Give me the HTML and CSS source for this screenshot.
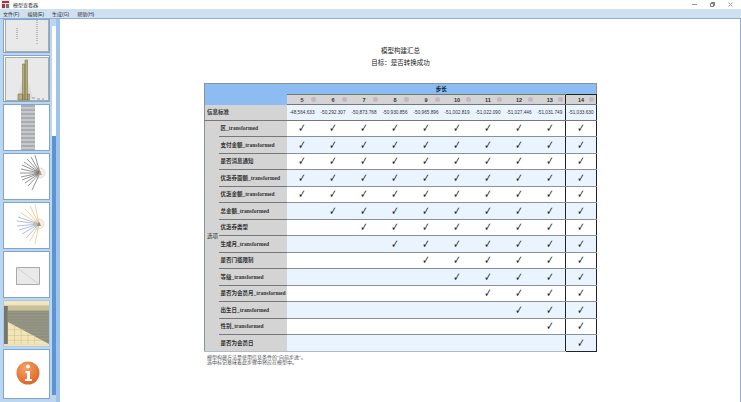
FILE: index.html
```html
<!DOCTYPE html>
<html lang="zh-CN">
	<head>
		<meta charset="utf-8">
		<title>模型查看器</title>
		<link rel="stylesheet" href="styles.css">
	</head>
	<body>
		<div class="title-bar">
			<svg class="app-icon" width="9" height="9" viewBox="0 0 9 9">
				<rect width="9" height="9" fill="#e8e8e8"></rect>
				<rect x="1" y="1" width="7" height="2" fill="#b03040"></rect>
				<rect x="1" y="4" width="3" height="4" fill="#b03040"></rect>
				<rect x="5" y="4" width="3" height="4" fill="#707078"></rect>
			</svg>
			<span class="app-title">模型查看器</span>
			<div class="window-buttons">
				<svg width="5" height="5" viewBox="0 0 5 5"><path d="M0 2.500h5" stroke="#999"></path></svg>
				<svg width="5" height="5" viewBox="0 0 5 5"><path d="M.5 1.500h3v3h-3zM1.500 1V.5h3v3H4" fill="none" stroke="#777"></path></svg>
				<svg width="5" height="5" viewBox="0 0 5 5"><path d="M.5 .5l4 4M4.500 .5l-4 4" stroke="#999"></path></svg>
			</div>
		</div>
		<div class="menu-bar">
			<span>文件(F)</span>
			<span>编辑(E)</span>
			<span>生成(G)</span>
			<span>帮助(H)</span>
		</div>
		<div class="workspace">
			<div class="sidebar">
				<div class="thumbs">
					<div class="thumb thumb-cut">
						<svg width="44" height="33" viewBox="0 0 44 33">
							<rect x=".5" y="-2" width="43" height="34.500" fill="#e9e9e9" stroke="#aaa"></rect>
							<path d="M32 1v22M12 9v12M32 24v2" stroke="#889" stroke-dasharray="1 1"></path>
						</svg>
					</div>
					<div class="thumb">
						<svg width="44" height="44" viewBox="0 0 44 44">
							<rect x=".5" y=".5" width="43" height="43" fill="#e9e9e9" stroke="#aaa"></rect>
							<path d="M12 42L17 24 20 6 23 24 28 42z" fill="#dcdcdc"></path>
							<path d="M13 37h5v6h-5zM17.500 7h2.500v36h-2.500zM20 3h2.500v40H20zM22.500 37h2v6h-2z" fill="#b9ae78" stroke="#6d6640" stroke-width=".5"></path>
							<path d="M27 41h3M32 42h3M37 42h2" stroke="#999"></path>
						</svg>
					</div>
					<div class="thumb">
						<svg width="44" height="45" viewBox="0 0 44 45">
							<rect x="16" width="14" height="45" fill="#a9adb1"></rect>
							<path d="M16 3h14M16 7h14M16 11h14M16 15h14M16 19h14M16 23h14M16 27h14M16 31h14M16 35h14M16 39h14M16 43h14" stroke="#e4e4e4"></path>
						</svg>
					</div>
					<div class="thumb">
						<svg width="44" height="45" viewBox="0 0 44 45">
							<circle cx="35" cy="19" r="5" fill="#f3efe8" stroke="#e4dfd8"></circle>
							<path d="M35 19L30 1M35 19L26 3M35 19L22 5M35 19L19 8M35 19L17 11M35 19L16 15M35 19L15 19M35 19L16 23M35 19L17 26M35 19L20 29M35 19L23 32M35 19L27 36" stroke="#666" stroke-width=".7"></path>
							<path d="M35 16.500l2 4.500h-4z" fill="#b8a878"></path>
						</svg>
					</div>
					<div class="thumb">
						<svg width="44" height="45" viewBox="0 0 44 45">
							<circle cx="34" cy="21" r="5" fill="#f3efe8" stroke="#e4dfd8"></circle>
							<path d="M34 21L30 1M34 21L25 3M34 21L20 6M34 21L16 10M34 21L30 41M34 21L25 38" stroke="#eec48a" stroke-width=".8"></path>
							<path d="M34 21L13 14M34 21L12 18M34 21L12 23M34 21L14 27M34 21L17 31M34 21L21 35" stroke="#9db0cc" stroke-width=".8"></path>
							<path d="M34 18.500l2 4.500h-4z" fill="#a09070"></path>
						</svg>
					</div>
					<div class="thumb">
						<svg width="44" height="45" viewBox="0 0 44 45">
							<rect x="11.500" y="15.500" width="23" height="17" fill="#e9e9e9" stroke="#aaa"></rect>
							<path d="M11.500 15.500l23 17" stroke="#d4d4d4"></path>
						</svg>
					</div>
					<div class="thumb thumb-active">
						<svg width="47" height="47" viewBox="0 0 47 47">
							<rect width="47" height="47" fill="#f1e7bf"></rect>
							<rect x="4" y="5" width="43" height="40" fill="#8f9080"></rect>
							<rect x="4" y="5" width="43" height="5" fill="#c9bf98"></rect>
							<path d="M4 12h43M4 15h43M4 18h43M4 21h43M4 24h43M4 27h43M4 30h43M4 33h43M4 36h43M4 39h43" stroke="#a3a490" stroke-width=".5"></path>
							<path d="M4 22L47 45H4z" fill="#f3e6b6"></path>
							<path d="M4 30h18M4 36h28M4 41h37M11 24v21M18 28v17M25 32v13M32 36v9" stroke="#c9b888" stroke-width=".5"></path>
							<rect y="5" width="4" height="40" fill="#77766a"></rect>
						</svg>
					</div>
					<div class="thumb thumb-last">
						<svg width="44" height="46" viewBox="0 0 44 46">
							<defs>
								<radialGradient id="info-ball" cx=".4" cy=".3" r=".8">
									<stop offset="0" stop-color="#f6a266"></stop>
									<stop offset="1" stop-color="#d9601c"></stop>
								</radialGradient>
							</defs>
							<circle cx="23" cy="22" r="11.500" fill="url(#info-ball)"></circle>
							<circle cx="23" cy="15.500" r="2" fill="#fff"></circle>
							<path d="M20.500 20h4.500v8h2v2h-7v-2h2v-6h-1.500z" fill="#fff"></path>
						</svg>
					</div>
				</div>
				<div class="thumb-scroll">
					<div class="scroll-btn"></div>
					<div class="scroll-thumb"></div>
					<div class="scroll-track"></div>
					<div class="scroll-btn"></div>
				</div>
			</div>
			<div class="splitter"></div>
			<div class="content">
				<p class="report-title">模型构建汇总</p>
				<p class="report-target">目标：是否转换成功</p>
				<table class="summary">
					<colgroup>
						<col class="col-side">
						<col class="col-name">
						<col span="10" class="col-step">
					</colgroup>
					<thead>
						<tr class="step-head">
							<th colspan="2" rowspan="2"></th>
							<th colspan="10">步长</th>
						</tr>
						<tr class="step-nums" id="step-nums"></tr>
						<tr class="criteria" id="criteria">
							<th colspan="2">信息标准</th>
						</tr>
					</thead>
					<tbody id="rows"></tbody>
				</table>
				<p class="note">模型构建方法是使用信息条件的"向前步进"。<br>选中标记意味着此步骤中将应在模型中。</p>
			</div>
		</div>

		<script>
			const steps = [5, 6, 7, 8, 9, 10, 11, 12, 13, 14];
			const values = ['-48,564.633', '-50,292.307', '-50,873.768', '-50,930.856', '-50,965.896', '-51,002.819', '-51,022.090', '-51,027.446', '-51,031.749', '-51,033.630'];
			// first step each effect shows up in
			const effects = [
				['区_transformed', 5],
				['支付金额_transformed', 5],
				['是否消息通知', 5],
				['优惠券面额_transformed', 5],
				['优惠金额_transformed', 5],
				['总金额_transformed', 6],
				['优惠券类型', 7],
				['生成月_transformed', 8],
				['是否门槛限制', 9],
				['等级_transformed', 10],
				['是否为会员月_transformed', 11],
				['出生日_transformed', 12],
				['性别_transformed', 13],
				['是否为会员日', 14]
			];

			let stepRow = document.getElementById('step-nums');
			let critRow = document.getElementById('criteria');
			steps.forEach((step, i) => {
				let cls = step == 14 ? ' class = "sel"' : '';
				stepRow.insertAdjacentHTML('beforeend', `<th${cls}><span class="num">${step}</span><i class="dot"></i></th>`);
				critRow.insertAdjacentHTML('beforeend', `<td${cls}>${values[i]}</td>`);
			});

			let body = document.getElementById('rows');
			effects.forEach((effect, i) => {
				let row = document.createElement('tr');
				let html = i == 0 ? `<th class="side" rowspan="${effects.length}">选项</th>` : '';
				html += `<th class="name">${effect[0]}</th>`;
				for(let step of steps) {
					let cls = step == 14 ? 'sel' : '';
					html += `<td class="${cls}">${step >= effect[1] ? '<span class="mark">✓</span>' : ''}</td>`;
				}
				row.innerHTML = html;
				body.appendChild(row);
			});
		</script>
	</body>
</html>
```
FILE: styles.css
```css
html, body {
	margin: 0;
	height: 402px;
	overflow: hidden;
}
body {
	display: flex;
	flex-direction: column;
	font-family: "Liberation Sans", "Noto Sans CJK SC", sans-serif;
	background: white;
}
.title-bar {
	height: 9px;
	display: flex;
	align-items: center;
	padding-left: 1px;
	gap: 3px;
}
.app-title {
	font-size: 5px;
	color: #333;
}
.window-buttons {
	margin-left: auto;
	display: flex;
	gap: 13px;
	padding-right: 8px;
}
.menu-bar {
	height: 9px;
	display: flex;
	align-items: center;
	gap: 8px;
	padding-left: 3px;
	background: #cfe0f1;
	border-bottom: 1px solid #8fb0d4;
	font-size: 5px;
	color: #333;
}
.workspace {
	flex: 1;
	display: flex;
	min-height: 0;
}
.sidebar {
	width: 56px;
	display: flex;
	background: #bcd6f0;
	overflow: hidden;
}
.thumbs {
	width: 52px;
	padding-left: 3px;
	box-sizing: border-box;
	display: flex;
	flex-direction: column;
	gap: 2px;
}
.thumb {
	width: 47px;
	height: 47px;
	flex: none;
	background: white;
	box-sizing: border-box;
	border: 1px solid #7fa6d0;
	display: flex;
	align-items: center;
	justify-content: center;
	overflow: hidden;
}
.thumb-cut {
	height: 34px;
	align-items: flex-end;
}
.thumb-active {
	border-color: #a9c8ea;
}
.thumb-last {
	height: 50px;
}
.thumb-scroll {
	width: 4px;
	display: flex;
	flex-direction: column;
}
.scroll-btn {
	height: 7px;
	flex: none;
	background: #bcd6f0;
}
.scroll-thumb {
	height: 110px;
	flex: none;
	background: white;
}
.scroll-track {
	flex: 1;
	background: #5b94d2;
}
.splitter {
	width: 4px;
	background: #9fc3ea;
}
.content {
	flex: 1;
	box-sizing: border-box;
	border-right: 1px solid #8fb0d4;
	padding-top: 28px;
	padding-left: 144px;
	color: #222;
	font-family: "Liberation Serif", "Noto Sans CJK SC", serif;
}
.report-title {
	margin: 0;
	width: 393px;
	text-align: center;
	font-size: 6.500px;
	line-height: 8px;
}
.report-target {
	margin: 4px 0 16px;
	width: 393px;
	text-align: center;
	font-size: 6.500px;
	line-height: 8px;
}
.summary {
	width: 393px;
	table-layout: fixed;
	border-collapse: collapse;
	font-size: 5.500px;
	color: #333;
	border: 1px solid #8a929a;
	border-bottom: none;
}
.col-side {
	width: 14px;
}
.col-name {
	width: 68px;
}
.col-step {
	width: 31px;
}
.summary th, .summary td {
	padding: 0;
}
.step-head th {
	height: 10px;
	background: #8dbcf2;
	color: #123;
}
.step-nums th {
	height: 9px;
	background: #d4d4d4;
	border-top: 1px solid #777;
	border-bottom: 1px solid #777;
	position: relative;
}
.num {
	font-family: "Liberation Sans", sans-serif;
}
.dot {
	position: absolute;
	right: 2px;
	top: 2px;
	width: 5px;
	height: 5px;
	border-radius: 50%;
	background: #c4b6c4;
}
.criteria th {
	height: 15px;
	background: #d4d4d4;
	text-align: left;
	padding-left: 2px;
	border-bottom: 1px solid #777;
}
.criteria td {
	background: #e9f4fe;
	text-align: center;
	font-family: "Liberation Sans", sans-serif;
	font-size: 4.700px;
	white-space: nowrap;
	border-bottom: 1px solid #777;
}
.summary tbody tr {
	height: 16.500px;
}
.summary tbody td {
	text-align: center;
	font-size: 12px;
	line-height: 12px;
	color: #222;
	font-family: "DejaVu Sans", sans-serif;
	border-bottom: 1px solid #8a9096;
}
.mark {
	display: inline-block;
	transform: scaleX(.75);
}
.summary tbody tr:nth-child(even) td {
	background: #e9f4fe;
}
.summary tbody tr:last-child td, .summary tbody tr:last-child th {
	border-bottom-color: #b4bac0;
}
.side {
	background: #d4d4d4;
	text-align: left;
	padding-left: 2px !important;
	font-weight: normal;
	border-bottom: 1px solid #b4bac0;
}
.name {
	background: #d4d4d4;
	text-align: left;
	padding-left: 2px !important;
	white-space: nowrap;
	border-bottom: 1px solid #777;
}
.summary .sel {
	border-left: 1px solid #222;
	border-right: 1px solid #222;
}
.step-nums .sel {
	border-top: 1px solid #222;
}
.summary tbody tr:last-child .sel {
	border-bottom: 1px solid #222;
}
.note {
	margin: 3px 0 0 3px;
	font-size: 5px;
	line-height: 5px;
	color: #555;
}
```
